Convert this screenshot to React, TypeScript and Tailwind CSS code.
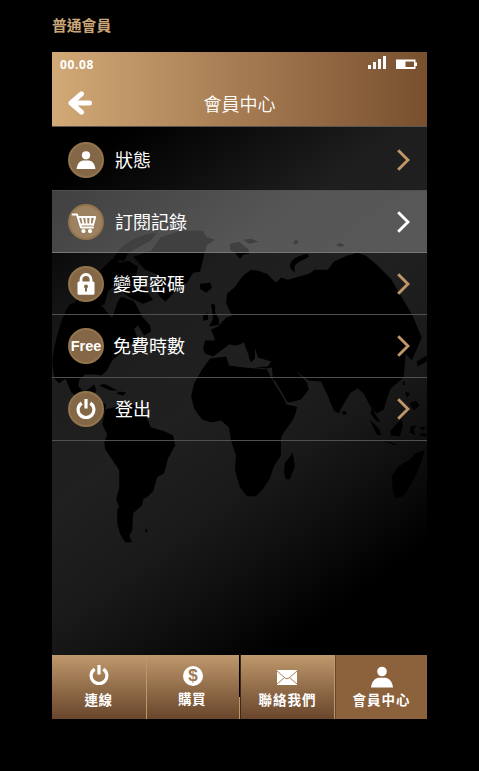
import React from "react";

const cjk = "font-['Noto_Sans_CJK_TC',sans-serif]";

function PersonIcon({ className }: { className: string }) {
  return (
    <svg viewBox="0 0 22 21" className={className} fill="#fff">
      <circle cx="11" cy="5" r="4.8" />
      <path d="M0 21C.6 15.5 3.6 11.5 7.8 11.2h6.4C18.400 11.500 21.400 15.500 22 21z" />
    </svg>
  );
}

function PowerIcon({ className }: { className: string }) {
  return (
    <svg viewBox="0 0 20 20" className={className} fill="none" stroke="#fff">
      <path d="M5.700 4.100A7.900 7.900 0 1 0 14.300 4.100" strokeWidth="3.200" />
      <path d="M10 0v9.500" strokeWidth="3.200" />
    </svg>
  );
}

function CartIcon() {
  return (
    <svg viewBox="0 0 26 20" className="mr-1 mt-0.5 h-5 w-[26px] shrink-0" fill="none" stroke="#fff" strokeWidth="2" strokeLinecap="round" strokeLinejoin="round">
      <path d="M1.500 1.500H6L10 14.500H22M6.700 4h17.500L22 12M8.800 11.500H22" />
      <path d="M11 4l1.500 7M15.200 4l.5 7M19.500 4L19 11" strokeWidth="1.800" />
      <circle cx="12.500" cy="18" r="1.100" fill="#fff" />
      <circle cx="19" cy="18" r="1.100" fill="#fff" />
    </svg>
  );
}

function LockIcon() {
  return (
    <svg viewBox="0 0 18 22" className="h-[22px] w-[18px]">
      <path d="M4 11V6.500a5 5 0 0 1 10 0V11" fill="none" stroke="#fff" strokeWidth="2.800" />
      <rect x="0.500" y="8.500" width="17" height="13.300" rx="1.500" fill="#fff" />
      <circle cx="9" cy="13.500" r="2" fill="#846746" />
      <path d="M8 14h2v4.500H8z" fill="#846746" />
    </svg>
  );
}

function Chevron({ color }: { color: string }) {
  return (
    <svg viewBox="0 0 13 22" className="mr-[17px] h-[22px] w-[13px]" fill="none" stroke={color} strokeWidth="2.900">
      <path d="M1.200 1.200L11 11L1.200 20.800" />
    </svg>
  );
}

function WorldMap() {
  return (
    <svg viewBox="52 126 375 529" className="absolute inset-0 h-full w-full" fill="#000">
      {/* North America */}
      <path d="M52 362C53 345 62 312 70 303L80 301L99 302L108 313L112 317L117 302L121 296L133 300L137 306L142 316L150 325L151 331L144 335L138 325L134 328L137 337L127 347L112 360L106 371L101 375L95 374L85 374L79 379L78 386L84 391L89 388L94 384L96 390L93 395L99 401L106 404L104 411L93 405L80 398L71 392L65 378L59 383L54 378z" />
      <path d="M74 303L85 283L104 266L112 258L120 262L122 280L108 290L104 304zM112 260C119 245 135 234 157 232L150 240L128 252L124 260zM116 263L128 260L138 266L134 280L124 276L117 285L110 274z" />
      <path d="M122 279L140 279L146 290L153 299L143 303L130 297L120 290z" />
      {/* Greenland */}
      <path d="M133 256L151 250L160 237L180 230L203 230L206 236L215 239L207 244L204 254L200 271L193 272L187 282L178 286L172 294L165 301L158 294L158 274L145 269z" />
      {/* Caribbean */}
      <path d="M99 385C106 381 110 388 118 390L110 390zM119 391L126 392L123 395L116 393z" />
      {/* South America */}
      <path d="M105 409L113 407L124 403L137 405L145 414L151 427L165 431L173 435L175 445L168 458L164 473L157 477L153 491L148 496L143 499L142 505L133 513L132 530L129 536L132 542L125 542L120 534L117 523L117 509L119 507L116 499L119 488L119 470L113 461L105 449L104 442L107 434L102 424z" />
      <circle cx="146" cy="530.500" r="1.300" />
      {/* Arctic islands and Iceland */}
      <path d="M230 243L239 241L249 249L249 253L243 254L240 258L235 252L230 249zM243 239L251 238L259 241L249 243zM293 242L296 239L299 241L296 244zM336 244L341 242L345 245L340 246zM200 283L210 282L212 287L206 292L200 288z" />
      {/* British Isles */}
      <path d="M211 303L215 304L215 311L219 319L219 324L209 326L213 318zM203 315L208 312L208 319L203 320z" />
      {/* Eurasia */}
      <path d="M203 348L205 340L215 340L213 334L211 329L218 326L226 317L232 315L226 302L227 293L235 286L243 275L251 269L258 270L267 273L276 282L281 277L288 279L302 275L309 273L315 269L328 269L334 261L347 255L358 252L366 255L376 263L391 278L403 298L413 315L422 337L417 349L412 360L406 353L405 365L404 377L391 388L387 399L384 409L377 413L370 405L364 393L358 388L351 392L344 403L339 413L334 410L327 393L321 381L309 380L303 376L296 370L307 382L309 389L301 399L286 403L282 398L273 380L272 367L267 368L257 367L250 360L244 342L237 345L229 344L224 348L213 356L205 353z" />
      <path d="M295 272C285 265 291 256 308 253L309 256C298 262 293 262 295 272z" />
      {/* Africa */}
      <path d="M210 358L226 356L229 365L244 367L257 368L267 369L272 379L286 404L297 406C296 422 281 431 281 440L281 455L274 466L270 478L263 489L256 496L247 496L240 487L235 470L236 455L231 440L229 427L221 420L211 422L202 419L194 408L191 396L194 383L202 369z" />
      <path d="M293 452L295 466L290 479L286 479L284 472L285 463z" />
      {/* South-east Asia and Australia */}
      <path d="M372 407L377 416L381 422L376 420L371 413zM370 419L379 428L382 435L377 434zM391 430L402 418L403 426L400 436L391 435zM403 381L405 381L405 385L403 384zM406 391L410 393L408 397L406 395zM410 403L416 400L420 405L414 410zM411 426L417 425L414 429L416 435L410 432zM419 427L426 426L424 430zM421 433L427 433L427 436L420 435zM383 440L399 444L393 444z" />
      <path d="M425 450C420 472 409 488 404 496L396 498L393 490L392 476L399 466L409 460L417 452zM417 361L427 355L427 361L418 366z" />
      <circle cx="344.500" cy="412.500" r="2" />
      {/* Inland seas */}
      <path d="M242 343L245 347L250 357L246 352zM255 348L258 357L271 361L268 366L249 367L244 364L242 359L251 362L255 358z" fill="#202020" />
      <path d="M274 380L287 402L297 405" fill="none" stroke="#202020" strokeWidth="1.500" />
    </svg>
  );
}

type RowProps = {
  label: string;
  size: string;
  active?: boolean;
  textMargin: string;
  children: React.ReactNode;
};

function Row({ label, size, active, textMargin, children }: RowProps) {
  return (
    <div className={`flex items-center border-b ${size} ${active ? "border-[#777] bg-white/25" : "border-[#505050]"}`}>
      <div className={`ml-4 flex h-9 w-9 shrink-0 items-center justify-center rounded-full border-2 border-[#92744d] ${active ? "bg-[#9c8260]" : "bg-[#846746]"}`}>
        {children}
      </div>
      <span className={`flex-1 pb-0.5 text-[18px] leading-6 text-white ${textMargin}`}>{label}</span>
      <Chevron color={active ? "#fff" : "#bf9768"} />
    </div>
  );
}

export default function App() {
  return (
    <div className={`h-[771px] w-[479px] overflow-hidden bg-black pl-[52px] ${cjk}`}>
      <div className="h-[52px] pt-3.5 text-[14.8px] font-bold leading-[22px] text-[#cba678]">普通會員</div>
      <div className="flex h-[667px] w-[375px] flex-col">
        <header className="h-[75px] border-b border-[#5a5550] bg-linear-to-r from-[#d2aa77] to-[#79502f]">
          <div className="flex h-6 items-center justify-between pl-2 pr-[9px]">
            <span className="pt-px font-['Open_Sans',sans-serif] text-[12px] font-bold leading-4 tracking-[0.6px] text-white">00.08</span>
            <svg viewBox="0 0 50 14" className="mb-0.5 h-3.5 w-[50px]" fill="#fff">
              <path d="M0 9h3v4H0zM5 6h3v7H5zM10 3h3v10h-3zM15 0h3v13h-3z" />
              <path fillRule="evenodd" d="M28 3.500h19.500v3H49v3.500h-1.500v3H28zM37.500 5.500v5.500H46V5.500z" />
            </svg>
          </div>
          <div className="grid h-[50px] grid-cols-[64px_1fr_64px] items-center pt-[3px]">
            <svg viewBox="0 0 24 24" className="ml-4 h-6 w-6" fill="none" stroke="#fff" strokeWidth="5" strokeLinecap="round" strokeLinejoin="round">
              <path d="M13.500 2.800L3 12l10.500 9.200M4 12h17.500" />
            </svg>
            <h1 className="text-center text-[18px] font-[350] leading-6 text-white">會員中心</h1>
          </div>
        </header>
        <main className="relative flex-1 bg-[linear-gradient(144deg,#000_7%,#1e1e1e_32%,#202020_48%,#191919_63%,#0e0e0e_74%,#000_86%)]">
          <WorldMap />
          <div className="relative">
            <Row label="狀態" size="h-16 pt-0.5" textMargin="ml-[11px]">
              <PersonIcon className="h-[18px] w-5" />
            </Row>
            <Row label="訂閱記錄" size="h-[62px]" active textMargin="ml-[11px]">
              <CartIcon />
            </Row>
            <Row label="變更密碼" size="h-[62px] pt-px" textMargin="ml-[9px]">
              <LockIcon />
            </Row>
            <Row label="免費時數" size="h-[63px]" textMargin="ml-[9px]">
              <span className="font-['Liberation_Sans',sans-serif] text-[14.5px] font-bold leading-4 text-white">Free</span>
            </Row>
            <Row label="登出" size="h-[63px]" textMargin="ml-[11px]">
              <PowerIcon className="h-5 w-5" />
            </Row>
          </div>
        </main>
        <nav className="grid h-16 grid-cols-[95px_94px_94px_92px] text-[13.500px] font-bold leading-5 text-white">
          <div className="flex flex-col items-center border-r border-[#bd966a] bg-linear-to-b from-[#bf996c] to-[#69462c] pr-px pt-2.5">
            <PowerIcon className="h-5 w-5" />
            <span className="mt-1 tracking-[0.6px]">連線</span>
          </div>
          <div className="flex bg-linear-to-b from-[#bf996c] to-[#69462c]">
            <div className="flex flex-1 flex-col items-center pt-[11px]">
              <div className="flex h-5 w-5 items-center justify-center rounded-full bg-white font-['Liberation_Sans',sans-serif] text-[17px] text-[#9b7853]">$</div>
              <span className="mt-0.5 pr-0.5 tracking-[0.6px]">購買</span>
            </div>
            <div className="w-px bg-[linear-gradient(#000_66%,#bd966a_66%)]" />
            <div className="w-px bg-[#3c291a]" />
          </div>
          <div className="flex flex-col items-center border-r border-[#bd966a] bg-linear-to-b from-[#bf996c] to-[#69462c] pt-[15px]">
            <svg viewBox="0 0 20 15" className="mr-0.5 h-[15px] w-5" fill="none">
              <path d="M0 0h20v15H0z" fill="#fff" />
              <path d="M0 1l8 7q2 1.500 4 0l8-7M0 14l7-6M20 14l-7-6" stroke="#a78258" />
            </svg>
            <span className="mt-1 tracking-[1px]">聯絡我們</span>
          </div>
          <div className="flex flex-col items-center border-l border-[#69462c] bg-[#8c623c] pt-[11px]">
            <PersonIcon className="h-[22px] w-[22px]" />
            <span className="mt-px tracking-[1px]">會員中心</span>
          </div>
        </nav>
      </div>
    </div>
  );
}
